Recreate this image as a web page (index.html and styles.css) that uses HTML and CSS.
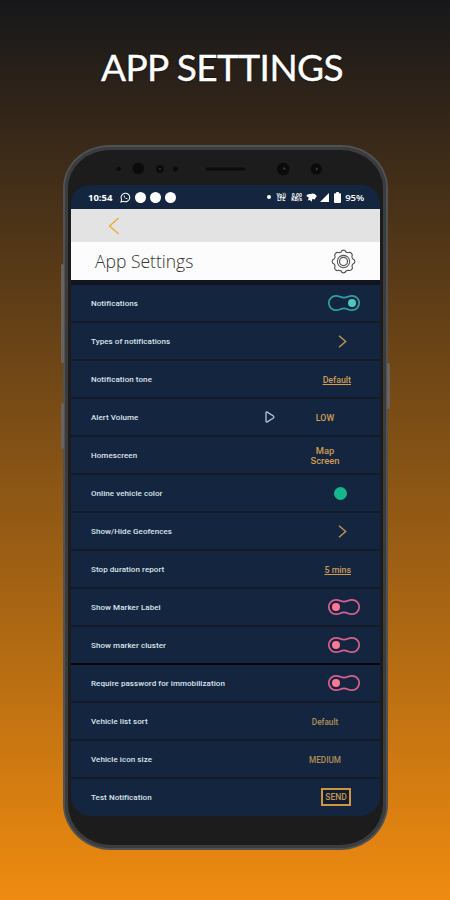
FILE: index.html
```
<!DOCTYPE html>
<html lang="en">
<head>
    <meta charset="UTF-8">
    <meta name="viewport" content="width=device-width, initial-scale=1.0">
    <title>App Settings</title>
    <link rel="stylesheet" href="styles.css">
</head>
<body>
    <!-- Shared shapes -->
    <svg class="defs" width="0" height="0">
        <symbol id="toggle" viewBox="0 0 34 18">
            <path d="M9 1.8C13 1.8 13.5 3.6 17 3.6S21 1.8 25 1.8A7.2 7.2 0 0 1 25 16.2C21 16.2 20.5 14.4 17 14.4S13 16.2 9 16.2A7.2 7.2 0 0 1 9 1.8Z" fill="none" stroke="currentColor" stroke-width="1.7"/>
        </symbol>
    </svg>

    <h1 class="title">APP SETTINGS</h1>

    <div class="phone">
        <span class="side-button volume"></span>
        <span class="side-button assistant"></span>
        <span class="side-button power"></span>

        <!-- Sensors and speaker -->
        <svg class="sensors" viewBox="0 0 315 35" width="315" height="35">
            <g fill="#0b0b0c">
                <circle cx="47.7" cy="18.500" r="2.2"/>
                <circle cx="67.7" cy="18" r="6"/>
                <circle cx="90" cy="18.500" r="4"/>
                <circle cx="106" cy="18.500" r="2.6"/>
                <rect x="137" y="17" width="41" height="3" rx="1.5"/>
                <circle cx="217" cy="18.500" r="6.5"/>
                <circle cx="251" cy="18.500" r="5.8"/>
            </g>
            <g fill="#34363b">
                <circle cx="218" cy="18" r="1.3"/>
                <circle cx="251.5" cy="18.5" r="1.3"/>
                <circle cx="90" cy="18.5" r="1"/>
            </g>
        </svg>

        <div class="screen">
            <div class="status-bar">
                <span class="time">10:54</span>
                <svg class="whatsapp" viewBox="0 0 12 12" width="11" height="11">
                    <path d="M1 11l.8-2.7A4.7 4.7 0 1 1 3.8 10.200Z" fill="none" stroke="#fff" stroke-width="1.1"/>
                    <path d="M4.200 3.600C3.700 5.500 6 8.200 8.200 7.900L8 6.800 7 6.600 6.400 7.100 5 5.500 5.400 5 5 3.700Z" fill="#fff"/>
                </svg>
                <span class="bubble"></span>
                <span class="bubble"></span>
                <span class="bubble"></span>

                <div class="status-right">
                    <span class="tiny-dot"></span>
                    <span class="net">Vo))<br>LTE</span>
                    <span class="net net-speed">0.00<br>KB/s</span>
                    <svg viewBox="0 0 11 9" width="11" height="9"><path d="M.2 3Q1.500.5 4.500 1 8-.5 10.800 3L8.500 6.500 6.500 5.800 5.500 8.800 3.800 7 1.800 7.500 2.800 4.500Z" fill="#fff"/></svg>
                    <svg class="signal" viewBox="0 0 9 9" width="9" height="9"><path d="M9 0V9H0Z" fill="#fff"/></svg>
                    <svg class="battery" viewBox="0 0 7 11" width="7" height="11"><path d="M2.200 0h2.600v1.200h1.200q1 0 1 1V10q0 1-1 1H1q-1 0-1-1V2.200q0-1 1-1h1.200Z" fill="#fff"/></svg>
                    <span class="percent">95%</span>
                </div>
            </div>

            <div class="nav-bar">
                <svg viewBox="0 0 12 18" width="12" height="18"><path d="M10.700 1L1.500 9l9.200 8" fill="none" stroke="#f0ad3c" stroke-width="1.500"/></svg>
            </div>

            <div class="header">
                <h2>App Settings</h2>
                <svg viewBox="0 0 26 26" width="25" height="25" fill="none" stroke="#555">
                    <path d="M10.500 3.200Q11 1.200 13 1.200T15.500 3.200Q16.800 4 18.200 3.700 20 3 21.300 4.500T21.800 7.500Q21.700 9.300 22.800 10.400 24.800 11 24.800 13T22.800 15.600Q21.700 16.800 21.900 18.200 22.800 20 21.400 21.400T18.200 22.200Q16.700 22 15.500 22.900 15 24.800 13 24.800T10.500 22.900Q9.300 22 7.800 22.200 6 23 4.600 21.400T4.100 18.200Q4.300 16.800 3.200 15.600 1.200 15 1.200 13T3.200 10.400Q4.300 9.300 4.200 7.500 3.300 5.900 4.700 4.500T7.800 3.700Q9.200 4 10.500 3.200Z" stroke-width="1.200"/>
                    <circle cx="13" cy="13" r="6.400" stroke-width="1.1"/>
                    <circle cx="13" cy="13" r="4.200" stroke-width="1.300"/>
                </svg>
            </div>

            <ul class="settings">
                <li><span class="label">Notifications</span>
                    <svg class="toggle on" width="34" height="18"><use href="#toggle"/><circle cx="25" cy="9" r="4"/></svg></li>
                <li><span class="label">Types of notifications</span>
                    <svg class="chevron" viewBox="0 0 9 13" width="9" height="13"><path d="M1 .8L7.700 6.500 1 12.200"/></svg></li>
                <li><span class="label">Notification tone</span>
                    <span class="value link">Default</span></li>
                <li><span class="label">Alert Volume</span>
                    <svg class="play" viewBox="0 0 10 12" width="10" height="12"><path d="M1 1.800Q1 .5 2.200 1.100L8.400 5Q9.200 6 8.400 7L2.200 10.900Q1 11.500 1 10.200Z"/></svg>
                    <span class="value centered">LOW</span></li>
                <li><span class="label">Homescreen</span>
                    <span class="value centered map">Map<br>Screen</span></li>
                <li><span class="label">Online vehicle color</span>
                    <span class="color-dot"></span></li>
                <li><span class="label">Show/Hide Geofences</span>
                    <svg class="chevron" viewBox="0 0 9 13" width="9" height="13"><path d="M1 .8L7.700 6.500 1 12.200"/></svg></li>
                <li><span class="label">Stop duration report</span>
                    <span class="value link">5 mins</span></li>
                <li><span class="label">Show Marker Label</span>
                    <svg class="toggle" width="34" height="18"><use href="#toggle"/><circle cx="9" cy="9" r="4"/></svg></li>
                <li><span class="label">Show marker cluster</span>
                    <svg class="toggle" width="34" height="18"><use href="#toggle"/><circle cx="9" cy="9" r="4"/></svg></li>
                <li><span class="label">Require password for immobilization</span>
                    <svg class="toggle" width="34" height="18"><use href="#toggle"/><circle cx="9" cy="9" r="4"/></svg></li>
                <li><span class="label">Vehicle list sort</span>
                    <span class="value centered dim">Default</span></li>
                <li><span class="label">Vehicle icon size</span>
                    <span class="value centered dim">MEDIUM</span></li>
                <li><span class="label">Test Notification</span>
                    <button class="send">SEND</button></li>
            </ul>
        </div>
    </div>
</body>
</html>
```

FILE: styles.css
```
* {
    margin: 0;
    padding: 0;
    box-sizing: border-box;
}

body {
    width: 450px;
    height: 900px;
    overflow: hidden;
    font-family: Roboto, sans-serif;
    background: linear-gradient(180deg, #17171a 0%, #ef8b10 100%);
}

.defs {
    position: absolute;
}

.title {
    height: 145px;
    padding-top: 44px;
    padding-right: 6px;
    font-family: Lato, sans-serif;
    font-size: 37px;
    line-height: 46px;
    font-weight: 400;
    letter-spacing: -0.55px;
    text-align: center;
    white-space: nowrap;
    color: #fff;
    text-shadow: 0 0 2px #000;
    -webkit-text-stroke: 0.4px #fff;
}

/* Phone body */
.phone {
    position: relative;
    width: 325px;
    height: 705px;
    margin-left: 63px;
    padding: 4px 3px 0;
    border: 2px solid #505254;
    border-radius: 47px 47px 48px 48px / 43px 43px 46px 46px;
    background: #1c1c1c;
    box-shadow: inset 0 0 0 3px #3b3c3d;
}

.side-button {
    position: absolute;
    width: 3px;
    border-radius: 2px;
    background: #6a635d;
}

.volume {
    left: -4px;
    top: 117px;
    height: 99px;
}

.assistant {
    left: -4px;
    top: 256px;
    height: 46px;
}

.power {
    right: -4px;
    top: 216px;
    height: 46px;
}

.sensors {
    display: block;
    height: 34px;
}

.screen {
    width: 309px;
    height: 631px;
    margin-left: 3px;
    border-radius: 19px 19px 20px 20px;
    background: #14263f;
    overflow: hidden;
}

/* Status bar */
.status-bar {
    display: flex;
    align-items: center;
    height: 24px;
    padding: 0 16px 0 17px;
    color: #fff;
}

.time {
    width: 32px;
    font-family: "Open Sans", sans-serif;
    font-size: 9.5px;
    font-weight: 700;
}

.bubble {
    width: 11px;
    height: 11px;
    margin-left: 4px;
    border-radius: 50%;
    background: #fff;
}

.status-right {
    display: flex;
    align-items: center;
    margin-left: auto;
}

.tiny-dot {
    width: 4px;
    height: 4px;
    margin-right: 5px;
    border-radius: 50%;
    background: #fff;
}

.net {
    width: 10px;
    margin-right: 5px;
    font-size: 5px;
    line-height: 4.5px;
    font-weight: 700;
    text-align: center;
    white-space: nowrap;
}

.net-speed {
    width: 11px;
    margin-right: 4px;
}

.signal {
    margin-left: 3px;
}

.battery {
    margin: 0 4px 0 5px;
}

.percent {
    font-size: 9.5px;
    font-weight: 600;
    font-family: "Open Sans", sans-serif;
    letter-spacing: -0.1px;
}

/* App header */
.nav-bar {
    display: flex;
    align-items: center;
    height: 33px;
    padding-left: 37px;
    background: #e3e3e3;
}

.header {
    display: flex;
    align-items: center;
    justify-content: space-between;
    height: 38px;
    padding: 0 24px 0 24px;
    background: #fcfcfc;
}

.header h2 {
    padding-bottom: 1px;
    font-family: "Open Sans", sans-serif;
    font-size: 17.5px;
    font-weight: 300;
    color: #333;
}

/* Settings list */
.settings {
    list-style: none;
    border-top: 5px solid #10151d;
}

.settings li {
    display: flex;
    align-items: center;
    height: 38px;
    padding-left: 20px;
    border-bottom: 2px solid #141a27;
}

.settings li:last-child {
    height: 36px;
    border-bottom: none;
}

.settings li:nth-child(10) {
    border-bottom-color: #03060c;
}

.label {
    flex: 1;
    font-size: 8px;
    font-weight: 500;
    letter-spacing: 0.07px;
    color: #dce4ed;
    white-space: nowrap;
}

.toggle {
    margin-right: 19px;
    color: #d9608f;
    fill: #ff7891;
}

.toggle.on {
    color: #329fa5;
    fill: #4cc9be;
}

.chevron {
    margin-right: 33px;
    fill: none;
    stroke: #c29650;
    stroke-width: 1.4;
}

.play {
    margin-right: 20px;
    fill: none;
    stroke: #b8bfe6;
    stroke-width: 1.3;
}

.value {
    padding-top: 1px;
    font-size: 8.8px;
    line-height: 10px;
    font-weight: 500;
    color: #d19c50;
}

.link {
    margin-right: 29px;
    text-decoration: underline;
}

.centered {
    width: 60px;
    margin-right: 25px;
    text-align: center;
}

.map {
    font-size: 9.4px;
}

.dim {
    font-size: 8.2px;
    color: #b08e56;
}

.color-dot {
    width: 13px;
    height: 13px;
    margin-right: 33px;
    border-radius: 50%;
    background: #16b58c;
}

.send {
    width: 30px;
    height: 18px;
    margin-right: 29px;
    border: 2px solid #d0963f;
    background: #101c34;
    font-family: Roboto, sans-serif;
    font-size: 8.5px;
    font-weight: 500;
    color: #c3994f;
}
```
